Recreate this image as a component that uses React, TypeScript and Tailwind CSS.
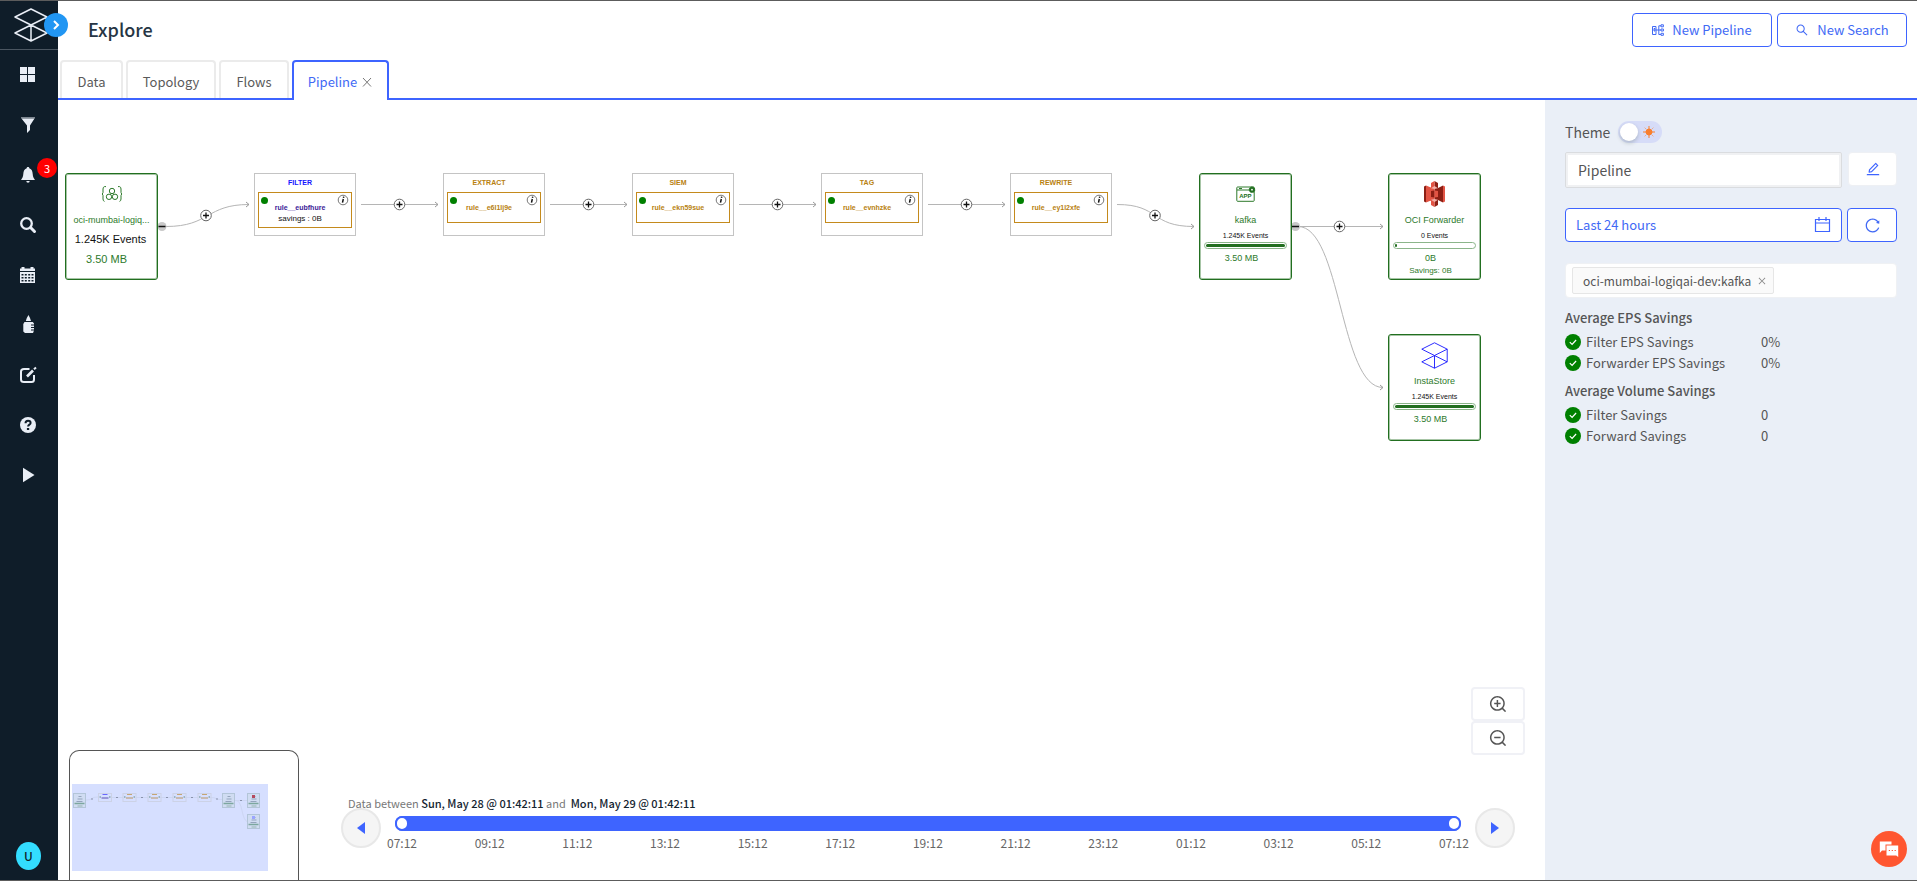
import type { ReactNode } from "react";
import {
  AiOutlineClose,
  AiOutlineEdit,
  AiOutlineReload,
  AiOutlineSearch,
  AiOutlineZoomIn,
  AiOutlineZoomOut,
} from "react-icons/ai";

function BrandMark({ className, stroke = 1 }: { className: string; stroke?: number }) {
  return (
    <svg viewBox="0 0 34 34" className={className} fill="none" stroke="currentColor" strokeWidth={stroke} strokeLinejoin="round" aria-hidden="true">
      <path d="M17 1 1 9l16 8 16-8z M17 17 1 25l16 8 16-8z M17 17v16 M33 9v16" />
    </svg>
  );
}

const navItems: { label: string; badge?: string; icon: ReactNode }[] = [
  {
    label: "Dashboard",
    icon: <path d="M0 0h7v7h-7z M8 0h7v7h-7z M0 8h7v7h-7z M8 8h7v7h-7z" />,
  },
  {
    label: "Filters",
    icon: (
      <>
        <path d="M1 0h14v1.500h-14z" opacity=".5" />
        <path d="M1.500 1.500h13L10 8.500V13l-3 3V8.500z" />
      </>
    ),
  },
  {
    label: "Alerts",
    badge: "3",
    icon: <path d="M8 0c.8 0 1.300.6 1.300 1.200C12 2 12.500 4.500 12.700 7c.2 2.500.8 4 2.300 6H1c1.500-2 2.100-3.500 2.300-6C3.500 4.500 4 2 6.700 1.200 6.700.6 7.200 0 8 0z M6.300 14h3.400a1.700 1.700 0 0 1-3.400 0z" />,
  },
  {
    label: "Search",
    icon: (
      <g fill="none" stroke="currentColor">
        <circle cx="6.500" cy="6.500" r="5.300" strokeWidth="2.300" />
        <path d="m10.800 10.800 3.700 3.700" strokeWidth="3" strokeLinecap="round" />
      </g>
    ),
  },
  {
    label: "Calendar",
    icon: (
      <>
        <path d="M0 1.500H1.500V0h3v1.500h6V0h3v1.500H15V4H0z" />
        <path fillRule="evenodd" d="M0 5h15v11H0z M1.500 7v1.500h2V7z m3.300 0v1.500h2V7z m3.400 0v1.500h2V7z M11.500 7v1.500h2V7z M1.500 10v1.500h2V10z m3.300 0v1.500h2V10z m3.400 0v1.500h2V10z M11.500 10v1.500h2V10z M1.500 13v1.500h2V13z m3.300 0v1.500h2V13z m3.400 0v1.500h2V13z M11.500 13v1.500h2V13z" />
      </>
    ),
  },
  {
    label: "Ingest",
    icon: <path d="M8.500-2 10 1l1 3H5.800l1-3z M4.500 5h8.300L14 6.500v1h-3v1h3V10h-3v1h3v1.500h-3v1h3l-1 2.500H5L3.300 14.500V7z" />,
  },
  {
    label: "Reports",
    icon: (
      <g fill="none" stroke="currentColor" strokeWidth="2">
        <path d="M9.500 2H4Q1 2 1 4.500v8Q1 15 4 15h7.500q2.500 0 2.500-2.500V8" />
        <path d="M7 9.500 13 3.500" strokeWidth="2.600" />
        <path d="M14 2.300 16 .5" />
      </g>
    ),
  },
  {
    label: "Help",
    icon: (
      <>
        <circle cx="8" cy="8" r="8" />
        <path d="M5.500 6.200C5.500 4.300 6.500 3.700 8 3.700s2.600.8 2.600 2.200c0 1.700-2.500 1.800-2.500 3.600" fill="none" stroke="#0f1d29" strokeWidth="2" />
        <path d="M6.900 11h2.300v2H6.900z" fill="#0f1d29" />
      </>
    ),
  },
  { label: "Play", icon: <path d="M3 .8 14.500 8 3 15.200z" /> },
];

function Sidebar() {
  return (
    <aside className="relative z-10 flex w-[58px] shrink-0 flex-col bg-[#0f1d29] text-[#e9eef6]">
      <div className="flex h-[49px] items-center border-b border-[#4b5661] pl-3.5">
        <BrandMark className="size-[34px]" stroke={1.5} />
      </div>
      <button type="button" aria-label="Expand menu" className="absolute top-3 left-11 flex size-6 items-center justify-center rounded-full bg-[#2196f3]">
        <svg viewBox="0 0 10 10" className="size-2.5" fill="none" stroke="white" strokeWidth="2" aria-hidden="true">
          <path d="M3 1l4 4-4 4" />
        </svg>
      </button>
      <nav className="flex flex-col">
        {navItems.map((item) => (
          <a key={item.label} href={"#" + item.label.toLowerCase()} aria-label={item.label} className="relative flex h-[50px] items-center pl-5">
            <svg viewBox="0 0 16 16" className="size-4 overflow-visible" fill="currentColor" aria-hidden="true">
              {item.icon}
            </svg>
            {item.badge && (
              <span className="absolute top-2 right-px flex size-5 items-center justify-center rounded-full bg-[#ff0000] text-[11px] text-white">{item.badge}</span>
            )}
          </a>
        ))}
      </nav>
      <button type="button" aria-label="User menu" className="mt-auto mb-2.5 ml-4 flex h-7 w-[25px] items-center justify-center rounded-[50%] bg-[#33ddff] text-[12px] font-medium text-[#0f1d29]">
        U
      </button>
    </aside>
  );
}

function PipelineIcon() {
  return (
    <svg viewBox="0 0 12 12" className="size-3" fill="none" stroke="currentColor" aria-hidden="true">
      <path d="M.5 2.500h3.500v8H.5z M2 4.500h1v2.500H2z M4 6h5 M9 1.800H6.800v8.700H9" />
      <path d="M9 .8h2.400v2H9z M9 5h2.400v2H9z M9 9.300h2.400v2H9z" />
    </svg>
  );
}

function Header() {
  return (
    <header className="flex h-[59px] items-start justify-between pr-2.5 pl-[30px]">
      <h1 className="pt-[11px] text-[18px] leading-[34px] font-medium text-[#263544]">Explore</h1>
      <div className="flex gap-[5px] pt-3 text-[13px] text-[#4169f5]">
        <button type="button" className="flex h-[34px] w-[140px] items-center justify-center gap-2 rounded border border-[#3e64ff]">
          <PipelineIcon />
          New Pipeline
        </button>
        <button type="button" className="flex h-[34px] w-[130px] items-center justify-center gap-2 rounded border border-[#3e64ff]">
          <AiOutlineSearch className="size-3.5" />
          New Search
        </button>
      </div>
    </header>
  );
}

function Tabs() {
  const tab = "flex h-[38px] items-center justify-center rounded-t border-2 border-b-0 border-[#ebebeb] pt-[3px] ";
  return (
    <div role="tablist" className="flex h-10 gap-[3px] border-b-2 border-[#3e64ff] pl-0.5 text-[13px] text-[#5a5a5a]">
      <button type="button" role="tab" aria-selected="false" className={tab + "w-[63px]"}>Data</button>
      <button type="button" role="tab" aria-selected="false" className={tab + "w-[90px]"}>Topology</button>
      <button type="button" role="tab" aria-selected="false" className={tab + "w-[70px]"}>Flows</button>
      <button type="button" role="tab" aria-selected="true" className="flex h-10 w-[97px] items-center justify-center gap-1 rounded-t border-2 border-b-0 border-[#3e64ff] bg-white pt-px text-[#4169f5]">
        Pipeline
        <svg viewBox="0 0 12 12" className="size-3" fill="none" stroke="#777" aria-hidden="true">
          <path d="m2 2 8 8.500M10 2l-8 8.500" />
        </svg>
      </button>
    </div>
  );
}

function Arrow({ d, x, y }: { d: string; x: number; y: number }) {
  return (
    <g fill="none" stroke="#b5b5b5" strokeWidth="1">
      <path d={d} />
      <path d={`M${x - 3} ${y - 2.500}l3 2.500-3 2.500`} stroke="#999" />
    </g>
  );
}

function Plus({ x, y }: { x: number; y: number }) {
  return (
    <g>
      <circle cx={x} cy={y} r="5.300" fill="white" stroke="#666" />
      <path d={`M${x - 3} ${y}h6M${x} ${y - 3}v6`} stroke="#111" strokeWidth="1.300" />
    </g>
  );
}

function Minus({ x, y }: { x: number; y: number }) {
  return (
    <g>
      <circle cx={x} cy={y} r="4.500" fill="#c9c9c9" />
      <path d={`M${x - 3.500} ${y}h7`} stroke="#111" strokeWidth="1.500" />
    </g>
  );
}

const ruleSteps = [
  { kind: "FILTER", rule: "rule__eubfhure", savings: "savings : 0B", pos: "left-[196px]", kindColor: "text-[#1414ff]", ruleColor: "text-[#3b1c98]" },
  { kind: "EXTRACT", rule: "rule__e6l1lj9e", pos: "left-[385px]", kindColor: "text-[#b8810f]", ruleColor: "text-[#b8810f]" },
  { kind: "SIEM", rule: "rule__ekn59sue", pos: "left-[574px]", kindColor: "text-[#b8810f]", ruleColor: "text-[#b8810f]" },
  { kind: "TAG", rule: "rule__evnhzke", pos: "left-[763px]", kindColor: "text-[#b8810f]", ruleColor: "text-[#b8810f]" },
  { kind: "REWRITE", rule: "rule__ey1l2xfe", pos: "left-[952px]", kindColor: "text-[#b8810f]", ruleColor: "text-[#b8810f]" },
];

function RuleNode({ step }: { step: (typeof ruleSteps)[number] }) {
  return (
    <div className={"absolute top-[73px] h-[63px] w-[102px] border border-[#c4c4c4] bg-white px-[3px] text-center " + step.pos}>
      <p className={"pt-1 pr-2.5 text-[7px] leading-[10px] font-bold " + step.kindColor}>{step.kind}</p>
      <div className={"relative mt-1 border border-[#c48a1c] pt-2.5 pr-2.5 " + (step.savings ? "h-[36px]" : "h-[31px]")}>
        <span className="absolute top-1 left-0.5 size-[7px] rounded-full bg-[#008000]" />
        <svg viewBox="0 0 12 12" className="absolute top-px right-0.5 size-3" fill="none" aria-hidden="true">
          <circle cx="6" cy="6" r="4.800" stroke="#777" />
          <path d="m6.300 5-.8 3.600M6.700 2.600l-.2 1.200" stroke="#111" strokeWidth="1.500" />
        </svg>
        <p className={"text-[7px] leading-[10px] font-bold " + step.ruleColor}>{step.rule}</p>
        {step.savings && <p className="text-[8px] leading-[12px] text-[#111]">{step.savings}</p>}
      </div>
    </div>
  );
}

const nodeBox = "absolute h-[107px] w-[93px] rounded-[3px] border border-[#226f20] bg-white text-center text-[#2d7a2b] shadow-[inset_0_0_0_1px_rgba(34,111,32,0.4)] ";

function TargetNode(props: { pos: string; icon: ReactNode; name: string; events: string; volume: string; full: boolean; savings?: string }) {
  return (
    <div className={nodeBox + props.pos}>
      <div className="flex h-[40px] items-center justify-center">{props.icon}</div>
      <p className="text-[9px] leading-[12px]">{props.name}</p>
      <p className="mt-1 text-[7px] leading-[12px] text-[#111]">{props.events}</p>
      <div className="mx-1 h-[7px] rounded-full border border-[#8bb58a] p-px">
        <div className={"h-full rounded-full bg-[#226f20] " + (props.full ? "w-full" : "w-0.5")} />
      </div>
      <p className="mt-0.5 pr-2 text-[9px] leading-[14px]">{props.volume}</p>
      {props.savings && <p className="pr-2 text-[8px] leading-[12px]">{props.savings}</p>}
    </div>
  );
}

function SourceIcon() {
  return (
    <svg viewBox="0 0 20 16" className="h-4 w-5" fill="none" stroke="currentColor" aria-hidden="true">
      <path d="M4 .6H2.500Q1 1 1 3v3.500L.3 8 1 9.500V13q0 2 1.500 2.400M16 .6h1.500Q19 1 19 3v3.500l.7 1.500-.7 1.500V13q0 2-1.500 2.400" />
      <circle cx="10" cy="5" r="2.700" />
      <circle cx="7" cy="10.800" r="2.700" />
      <circle cx="13" cy="10.800" r="2.700" />
    </svg>
  );
}

function AppIcon() {
  return (
    <svg viewBox="0 0 20 16" className="h-4 w-5" fill="none" stroke="currentColor" aria-hidden="true">
      <rect x=".8" y="1" width="17.400" height="14.300" rx=".8" />
      <path d="M1 4h13M3 2.500h3" />
      <circle cx="16" cy="3.700" r="2.800" fill="#226f20" stroke="#226f20" strokeDasharray="1.200 .7" />
      <circle cx="16" cy="3.700" r=".9" fill="white" stroke="none" />
      <text x="9.300" y="12" textAnchor="middle" fontSize="6" fontWeight="bold" fill="#226f20" stroke="none">APP</text>
    </svg>
  );
}

function BucketIcon() {
  return (
    <svg viewBox="0 0 21 26" className="h-[26px] w-[21px]" aria-hidden="true">
      <path fill="#8c1f14" d="M0 5.500 2 4.500v17L0 20.500z M10.500 0l3.500 2v22l-3.500 2z M14 7l5-2.500v17L14 19z" />
      <path fill="#e25444" d="M2 4.500 7 6.500v13l-5 2z M10.500 0 7 2v22l3.500 2z M19 4.500l2 1v15l-2 1z" />
      <path fill="#f3b0a8" d="m10.500 5 3.500 2.300-3.500.7L7 7.300z M10.500 21 14 18.700l-3.500-.7-3.500.7z" />
      <path fill="#8c1f14" d="M7 10l3.500-.5v7L7 16z" />
      <path fill="#e25444" d="M14 10l-3.500-.5v7L14 16z" />
    </svg>
  );
}

function PipelineCanvas() {
  return (
    <div className="absolute inset-0 overflow-hidden font-['Liberation_Sans',Arial,sans-serif]">
      <svg viewBox="58 100 1487 400" className="absolute top-0 left-0 h-[400px] w-[1487px]" aria-hidden="true">
        <Arrow d="M166 226.500C210 226.500 206 204.500 249 204.500" x={249} y={204.5} />
        <Plus x={206} y={215.5} />
        {[361, 550, 739, 928].map((x) => (
          <g key={x}>
            <Arrow d={`M${x} 204.500h77`} x={x + 77} y={204.5} />
            <Plus x={x + 38.5} y={204.5} />
          </g>
        ))}
        <Arrow d="M1117 204.500C1160 204.500 1150 226.500 1194 226.500" x={1194} y={226.5} />
        <Plus x={1155} y={215.5} />
        <Arrow d="M1298 226.500h85" x={1383} y={226.5} />
        <Arrow d="M1298 226.500C1341 226.500 1340 387.500 1383 387.500" x={1383} y={387.5} />
        <Plus x={1339.5} y={226.5} />
        <Minus x={162} y={226.5} />
        <Minus x={1295.5} y={226.5} />
      </svg>

      <div className={nodeBox + "top-[73px] left-[7px]"}>
        <div className="flex h-[40px] items-center justify-center">
          <SourceIcon />
        </div>
        <p className="text-[9px] leading-[12px]">oci-mumbai-logiq...</p>
        <p className="mt-1.5 pr-0.5 text-[11px] leading-[14px] text-[#111]">1.245K Events</p>
        <p className="mt-1.5 pr-2.5 text-[11px] leading-[14px]">3.50 MB</p>
      </div>

      {ruleSteps.map((step) => (
        <RuleNode key={step.kind} step={step} />
      ))}

      <TargetNode pos="top-[73px] left-[1141px]" icon={<AppIcon />} name="kafka" events="1.245K Events" volume="3.50 MB" full />
      <TargetNode pos="top-[73px] left-[1330px]" icon={<BucketIcon />} name="OCI Forwarder" events="0 Events" volume="0B" savings="Savings: 0B" full={false} />
      <TargetNode pos="top-[234px] left-[1330px]" icon={<BrandMark className="size-[27px] text-[#2222ff]" stroke={1.2} />} name="InstaStore" events="1.245K Events" volume="3.50 MB" full />
    </div>
  );
}

function MiniTarget({ x, y }: { x: number; y: number }) {
  return (
    <g>
      <rect x={x} y={y} width="12" height="14" fill="#d0dcf2" stroke="#b3c5d8" />
      <path d={`M${x + 5} ${y + 3}h3M${x + 4} ${y + 5.5}h5M${x + 3} ${y + 8}h6`} stroke="#94a4bc" />
      <path d={`M${x + 1} ${y + 10}h10`} stroke="#7ca79f" strokeWidth="1.500" />
      <path d={`M${x + 4} ${y + 12.5}h5`} stroke="#96b5b0" />
    </g>
  );
}

function MiniMap() {
  return (
    <div className="h-[131px] w-[230px] shrink-0 rounded-t-[10px] border border-b-0 border-[#555] bg-white pt-[33px] pl-0.5">
      <svg viewBox="0 0 196 87" className="h-[87px] w-[196px]" fill="none" aria-hidden="true">
        <path d="M0 0h196v87H0z" fill="#d6dfff" />
        <path d="M14 16q5 0 6-1.500t6-1.500M39 13.500h12M64 13.500h12M88 13.500h13M113 13.500h13M138 13.500q5 0 6 1t6 1M162 16.500h13M164 16.500q4 0 6 10t5 11" stroke="#cdd6f3" />
        <path d="M19 15h2M44 13.500h2M69 13.500h2M94 13.500h2M119 13.500h2M144 15h2M168 16.500h2" stroke="#8a93ad" />
        <MiniTarget x={1.5} y={9.5} />
        {[26.5, 51, 76, 101, 126].map((x, i) => (
          <g key={x}>
            <rect x={x} y="9.500" width="13" height="8" stroke="#ccd2e6" />
            <path d={`M${x + 4} 10.500h5`} stroke={i === 0 ? "#6868ff" : "#c5a574"} />
            <path d={`M${x + 1} 13h1.500M${x + 10.500} 13h1.500`} stroke="#5f8c86" />
            <path d={`M${x + 3} 14h7`} stroke={i === 0 ? "#5a4fb0" : "#b99462"} />
          </g>
        ))}
        <MiniTarget x={150.5} y={9.5} />
        <MiniTarget x={175.5} y={9.5} />
        <MiniTarget x={175.5} y={30.5} />
        <path d="M180 11h3v3h-3z" fill="#b54a5e" />
        <path d="M180 32h3v3h-3z" fill="#9aa5ff" />
      </svg>
    </div>
  );
}

const hours = ["07:12", "09:12", "11:12", "13:12", "15:12", "17:12", "19:12", "21:12", "23:12", "01:12", "03:12", "05:12", "07:12"];

const rangeInput =
  "pointer-events-none absolute inset-0 h-[15px] w-full appearance-none bg-transparent [&::-webkit-slider-thumb]:pointer-events-auto [&::-webkit-slider-thumb]:h-[15px] [&::-webkit-slider-thumb]:w-3.5 [&::-webkit-slider-thumb]:appearance-none [&::-webkit-slider-thumb]:rounded-full [&::-webkit-slider-thumb]:border-2 [&::-webkit-slider-thumb]:border-[#3e64ff] [&::-webkit-slider-thumb]:bg-white";

const stepButton = "flex size-10 shrink-0 items-center justify-center rounded-full border-2 border-[#e8e8e8] bg-[#f5f5f5] text-[#3e64ff]";

function Timeline() {
  return (
    <section aria-label="Time range" className="flex-1 pt-[45px]">
      <p className="relative h-[13px] pl-[7px] text-[11px] leading-4 text-[#777]">
        Data between <span className="font-medium text-[#14242f]">Sun, May 28 @ 01:42:11</span> and&nbsp; <span className="font-medium text-[#14242f]">Mon, May 29 @ 01:42:11</span>
      </p>
      <div className="flex gap-3.5">
        <button type="button" aria-label="Earlier" className={stepButton}>
          <svg viewBox="0 0 8 12" className="h-3 w-2" fill="currentColor" aria-hidden="true"><path d="M8 0v12L0 6z" /></svg>
        </button>
        <div className="flex-1 pt-2">
          <div className="relative h-[15px] rounded-full bg-[#3e64ff]">
            <input type="range" aria-label="Range start" min={0} max={24} defaultValue={0} className={rangeInput} />
            <input type="range" aria-label="Range end" min={0} max={24} defaultValue={24} className={rangeInput} />
          </div>
          <div className="mt-1 flex justify-between px-[7px] text-[12px] leading-4 text-[#666]">
            {hours.map((hour, i) => (
              <span key={i} className="flex w-0 justify-center">{hour}</span>
            ))}
          </div>
        </div>
        <button type="button" aria-label="Later" className={stepButton}>
          <svg viewBox="0 0 8 12" className="h-3 w-2" fill="currentColor" aria-hidden="true"><path d="M0 0v12l8-6z" /></svg>
        </button>
      </div>
    </section>
  );
}

function SavingsGroup({ title, rows }: { title: string; rows: [string, string][] }) {
  return (
    <section>
      <h2 className="h-[27px] text-[13px] leading-[27px] font-medium">{title}</h2>
      <dl>
        {rows.map(([name, value]) => (
          <div key={name} className="flex h-[21px] items-center text-[13px]">
            <dt className="flex w-[196px] items-center gap-[5px]">
              <svg viewBox="0 0 16 16" className="size-4" aria-hidden="true">
                <circle cx="8" cy="8" r="8" fill="#008000" />
                <path d="m4.800 8.200 2.300 2.300 4-4.500" fill="none" stroke="white" strokeWidth="1.200" />
              </svg>
              {name}
            </dt>
            <dd>{value}</dd>
          </div>
        ))}
      </dl>
    </section>
  );
}

function SidePanel() {
  return (
    <aside className="w-[372px] shrink-0 bg-[#eaeff7] pt-5 pr-5 pl-5 text-[#555]">
      <div className="flex items-center gap-2 text-[14px]">
        <label htmlFor="theme" className="leading-[22px]">Theme</label>
        <span className="relative mt-px h-[22px] w-11 rounded-full bg-[#d6dcf8]">
          <input id="theme" type="checkbox" className="absolute inset-0 size-full appearance-none" />
          <span className="pointer-events-none absolute top-0.5 left-0.5 size-[18px] rounded-full bg-white shadow-[0_2px_4px_rgba(0,35,11,0.2)]" />
          <svg viewBox="0 0 12 12" className="pointer-events-none absolute top-[5px] right-[7px] size-3" stroke="#f97f2e" aria-hidden="true">
            <circle cx="6" cy="6" r="3" fill="#f97f2e" />
            <path d="M6 0v12M0 6h12" strokeWidth="1" />
            <path d="m1.800 1.800 8.400 8.400M10.200 1.800l-8.400 8.400" strokeWidth="1" strokeDasharray="1 9.900" />
          </svg>
        </span>
      </div>

      <div className="mt-[9px] flex items-start justify-between">
        <input type="text" aria-label="Name" defaultValue="Pipeline" className="h-9 w-[277px] rounded-[2px] border border-[#dadcdf] bg-white px-3 text-[14px] text-[#555] shadow-[inset_0_0_0_2px_#f0f1f3]" />
        <button type="button" aria-label="Edit name" className="flex h-[34px] w-[49px] items-center justify-center rounded border border-[#eef0f4] bg-white text-[#3e64ff]">
          <AiOutlineEdit className="size-4" />
        </button>
      </div>

      <div className="mt-5 flex justify-between text-[13px] text-[#4169f5]">
        <button type="button" className="flex h-[34px] w-[277px] items-center justify-between rounded border border-[#3e64ff] bg-white px-2.5">
          Last 24 hours
          <svg viewBox="0 0 18 18" className="size-[18px]" fill="none" stroke="#3e64ff" aria-hidden="true">
            <path d="M2.500 3.500h14v12h-14z M2.500 7h14" strokeWidth="1.200" />
            <path d="M6 1v4M13 1v4" strokeWidth="1.200" />
          </svg>
        </button>
        <button type="button" aria-label="Refresh" className="flex h-[34px] w-[50px] items-center justify-center rounded border border-[#3e64ff] bg-white">
          <AiOutlineReload className="size-[17px]" />
        </button>
      </div>

      <div className="mt-[21px] flex h-[35px] items-center rounded border border-[#eff1f4] bg-white pl-1.5">
        <span className="flex h-[27px] items-center gap-1.5 rounded-[2px] border border-[#e6e6e6] bg-[#fafafa] pr-1.5 pl-2.5 text-[12px]">
          oci-mumbai-logiqai-dev:kafka
          <button type="button" aria-label="Remove oci-mumbai-logiqai-dev:kafka">
            <AiOutlineClose className="size-2.5 text-[#888]" />
          </button>
        </span>
      </div>

      <div className="mt-1.5 flex flex-col gap-1">
        <SavingsGroup title="Average EPS Savings" rows={[["Filter EPS Savings", "0%"], ["Forwarder EPS Savings", "0%"]]} />
        <SavingsGroup title="Average Volume Savings" rows={[["Filter Savings", "0"], ["Forward Savings", "0"]]} />
      </div>
    </aside>
  );
}

export default function App() {
  const zoomButton = "flex h-[34px] w-[54px] items-center justify-center rounded border-2 border-[#f0f1f6] bg-white text-[#555]";
  return (
    <div className="flex h-screen overflow-hidden border-y border-[#5c5c5c] bg-white font-['Noto_Sans_CJK_SC','Open_Sans',sans-serif]">
      <Sidebar />
      <div className="flex min-w-0 flex-1 flex-col">
        <Header />
        <Tabs />
        <div className="flex min-h-0 flex-1">
          <main className="relative flex min-w-0 flex-1 flex-col justify-end">
            <PipelineCanvas />
            <div className="relative flex flex-col items-end pr-5">
              <button type="button" aria-label="Zoom in" className={zoomButton}><AiOutlineZoomIn className="size-5" /></button>
              <button type="button" aria-label="Zoom out" className={zoomButton}><AiOutlineZoomOut className="size-5" /></button>
            </div>
            <div className="relative -mt-[5px] flex h-[130px] gap-[42px] pr-[30px] pl-[11px]">
              <MiniMap />
              <Timeline />
            </div>
          </main>
          <SidePanel />
        </div>
      </div>
      <button type="button" aria-label="Open chat" className="fixed right-2.5 bottom-3.5 flex size-9 items-center justify-center rounded-full bg-[#ff5630]">
        <svg viewBox="0 0 20 17" className="h-[17px] w-5" aria-hidden="true">
          <path d="M1 .5h11.500v3H6.500v6H3L.8 12V.5z" fill="white" />
          <path d="M7.500 4.500h11.700V16l-2-1.500H7.500z" fill="white" />
          <path d="M9.800 9.500h1.200M12.700 9.500h1.200M15.600 9.500h1.200" stroke="#ff5630" strokeWidth="1.200" />
        </svg>
      </button>
    </div>
  );
}
